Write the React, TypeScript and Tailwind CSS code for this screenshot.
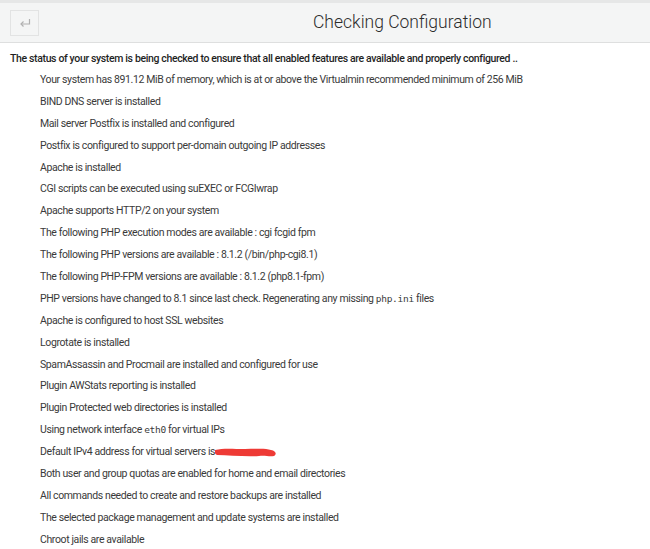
import React from 'react';

const items: React.ReactNode[] = [
  'Your system has 891.12 MiB of memory, which is at or above the Virtualmin recommended minimum of 256 MiB',
  'BIND DNS server is installed',
  'Mail server Postfix is installed and configured',
  'Postfix is configured to support per-domain outgoing IP addresses',
  'Apache is installed',
  'CGI scripts can be executed using suEXEC or FCGIwrap',
  'Apache supports HTTP/2 on your system',
  'The following PHP execution modes are available : cgi fcgid fpm',
  'The following PHP versions are available : 8.1.2 (/bin/php-cgi8.1)',
  'The following PHP-FPM versions are available : 8.1.2 (php8.1-fpm)',
  <>
    PHP versions have changed to 8.1 since last check. Regenerating any missing{' '}
    <code className="font-['DejaVu_Sans_Mono',monospace] text-[9.5px] tracking-[-0.3px]">php.ini</code> files
  </>,
  'Apache is configured to host SSL websites',
  'Logrotate is installed',
  'SpamAssassin and Procmail are installed and configured for use',
  'Plugin AWStats reporting is installed',
  'Plugin Protected web directories is installed',
  <>
    Using network interface{' '}
    <code className="font-['DejaVu_Sans_Mono',monospace] text-[9.5px] tracking-[-0.3px]">eth0</code> for virtual IPs
  </>,
  <>
    Default IPv4 address for virtual servers is
    <span className="relative inline-block w-[60px] h-[10px] align-middle">
      <svg width="62" height="12" viewBox="0 0 62 12" className="absolute left-0 -top-[1px]">
        <path
          d="M0 4 C8 2, 18 3, 30 3 C42 3, 50 2, 56 4 C61 5, 62 8, 59 10 C54 11, 50 9, 44 10 C30 11, 14 9, 2 9 C0 8, -1 6, 0 4 Z"
          fill="#ee3a35"
        />
      </svg>
    </span>
  </>,
  'Both user and group quotas are enabled for home and email directories',
  'All commands needed to create and restore backups are installed',
  'The selected package management and update systems are installed',
  'Chroot jails are available',
];

const App = () => {
  return (
    <div className="w-[650px] h-[549px] overflow-hidden bg-white font-['Roboto',sans-serif]">
      <div className="border-t-[3px] border-[#e6e7e7] bg-[#f4f5f5] border-b border-b-[#dedfdf] h-[43px] flex items-center">
        <div className="ml-[10px] w-[29px] h-[26px] border border-[#e2e3e3] flex items-center justify-center">
          <svg width="12" height="10" viewBox="0 0 12 10" fill="none" stroke="#b0b0b0" strokeWidth="1.2">
            <path d="M10.5 1 V6 H2" />
            <path d="M4.5 3.5 L2 6 L4.5 8.5" />
          </svg>
        </div>
        <h1 className="ml-[274px] text-[17.5px] font-light text-[#2c2c2c] leading-none">Checking Configuration</h1>
      </div>
      <div className="pl-[10px] pt-[9px] text-[10.5px] tracking-[-0.36px] text-[#1f1f1f] font-medium leading-[14px]">
        The status of your system is being checked to ensure that all enabled features are available and properly configured ..
      </div>
      <ul className="pl-[40px] pt-[3px] text-[10.5px] tracking-[-0.38px] text-[#3a3a3a] leading-[14px]">
        {items.map((item, i) => (
          <li key={i} className="h-[21.9px] flex items-center whitespace-nowrap">
            <span>{item}</span>
          </li>
        ))}
      </ul>
    </div>
  );
};

export default App;
